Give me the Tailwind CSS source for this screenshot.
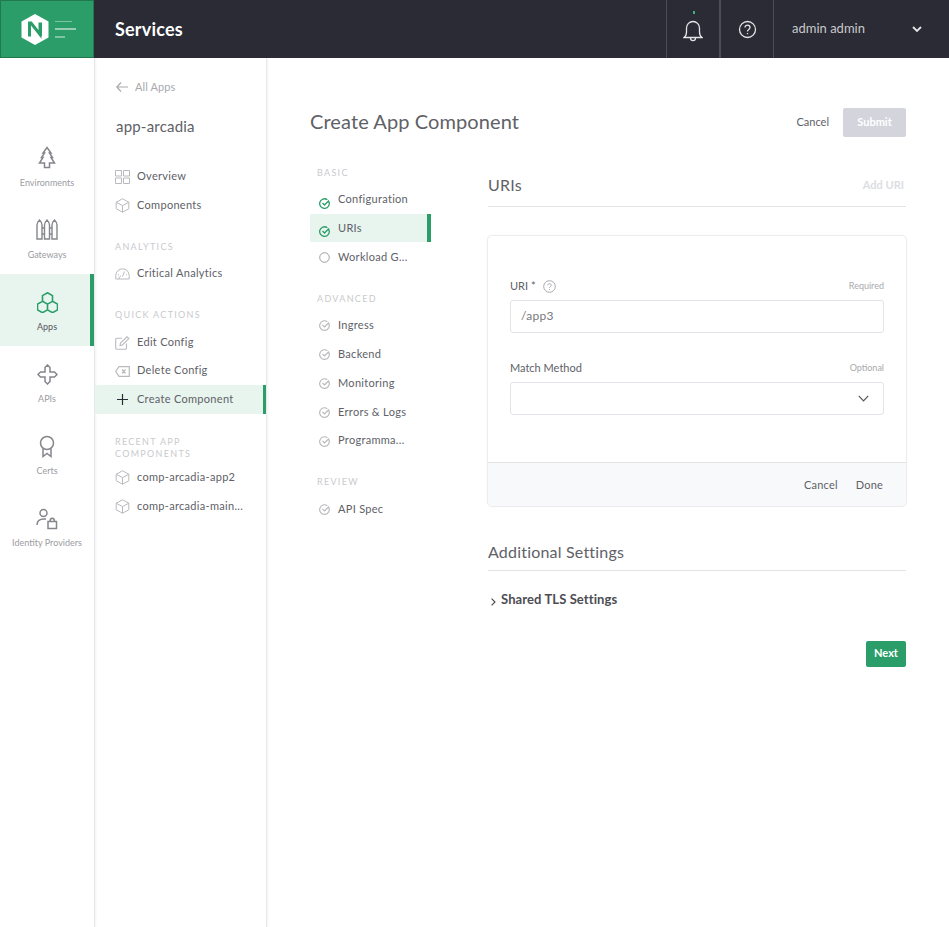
<!doctype html>
<html>
<head>
<title>Create App Component</title>
<meta charset="utf-8">
<script src="https://cdn.jsdelivr.net/npm/@tailwindcss/browser@4"></script>
</head>
<body class="bg-white font-['Lato','Open_Sans',sans-serif] text-[#606167] w-[949px] h-[927px] overflow-hidden">
<!-- top bar -->
<header class="flex h-[58px] bg-[#2a2b34] text-white">
  <div class="w-[94px] bg-[#2a9d68] border border-[#23794f] flex items-center justify-center gap-[6px] pl-[3px]">
    <svg width="28" height="33" viewBox="0 0 28 32"><path d="M14 .5 27.500 8v16L14 31.500.5 24V8z" fill="#fff"/><path d="M8.500 23V9.500h1.500L19 21V9M19.500 22.500V9" fill="none" stroke="#2a9d68" stroke-width="3"/></svg>
    <div class="flex flex-col gap-[6px]"><div class="h-px w-[17px] bg-white/40"></div><div class="h-[2px] w-[21px] bg-white/50"></div><div class="h-[2px] w-[10px] bg-white/40"></div></div>
  </div>
  <div class="flex-1 flex items-center pl-[21px] text-[18px] tracking-[.2px] font-bold">Services</div>
  <div class="relative w-[53px] border-l border-[#4a4d5e] flex items-center justify-center">
    <div class="absolute top-[11px] left-[26px] w-[2px] h-[3px] bg-[#3bb27a]"></div>
    <svg class="mt-[3px]" width="20" height="22" viewBox="0 0 20 22" fill="none" stroke="#e4e4e6" stroke-width="1.300"><path d="M1 17.500h18c-1.500-1-2.500-3-2.500-5.500V8a6.500 6.500 0 0 0-13 0v4c0 2.500-1 4.500-2.500 5.500zM7.500 18c0 3.500 5 3.500 5 0"/></svg>
  </div>
  <div class="w-[54px] border-l-2 border-[#4a4d5e] flex items-center justify-center">
    <svg width="19" height="19" viewBox="0 0 19 19" fill="none" stroke="#e4e4e6" stroke-width="1.300"><circle cx="9.500" cy="9.500" r="8"/><path d="M7 7.500c0-3.300 5-3.300 5 0 0 2-2.500 2-2.500 4"/><path d="M9.500 13v1.200"/></svg>
  </div>
  <div class="w-[176px] border-l border-[#4a4d5e] flex items-center pl-[18px] pr-[27px] justify-between text-[13px] text-[#c9c9cd]">
    <span>admin admin</span>
    <svg width="10" height="7" viewBox="0 0 10 7" fill="none" stroke="#e4e4e6" stroke-width="1.800"><path d="M1 1l4 4 4-4"/></svg>
  </div>
</header>

<div class="flex h-[869px]">
  <!-- icon rail -->
  <nav class="w-[95px] shrink-0 border-r border-[#e8e8ea] shadow-[1px_0_2px_rgba(0,0,0,.05)] pt-[72px] text-[9px] text-[#9b9ca1] text-center">
    <a class="h-[72px] flex flex-col items-center pt-[16px]">
      <svg width="18" height="24" viewBox="0 0 18 24" fill="none" stroke="#85868b" stroke-width="1.500"><path d="M9 1.500l4 5.500h-1.500l3 4.500h-1.500l3.500 5.500H11.500v4.500h-5V17H1.500L5 11.500H3.500l3-4.500H5z"/></svg>
      <span class="mt-[6px]">Environments</span>
    </a>
    <a class="h-[72px] flex flex-col items-center pt-[16px]">
      <svg width="22" height="24" viewBox="0 0 22 24" fill="none" stroke="#85868b" stroke-width="1.400"><path d="M1 21V7c0-2 1-3.500 2.500-5C5 3.500 6 5 6 7v14zM8.500 21V7c0-2 1-3.500 2.500-5 1.500 1.500 2.500 3 2.500 5v14zM16 21V7c0-2 1-3.500 2.500-5C20 3.500 21 5 21 7v14zM6 10h2.500M6 16h2.500M13.500 10H16M13.500 16H16"/></svg>
      <span class="mt-[6px]">Gateways</span>
    </a>
    <a class="h-[72px] flex flex-col items-center pt-[18px] bg-[#e8f4ee] border-r-4 border-[#2a9d68] text-[#55565c] pl-[4px]">
      <svg width="21" height="21" viewBox="0 0 21 21" fill="none" stroke="#2a9d68" stroke-width="1.600"><path d="M10.500.8l5 2.850v5.700l-5 2.850-5-2.850v-5.700zM5.500 9.300l5 2.850v5.700l-5 2.850-5-2.850v-5.700zM15.500 9.300l5 2.850v5.700l-5 2.850-5-2.850v-5.700z"/></svg>
      <span class="mt-[7px]">Apps</span>
    </a>
    <a class="h-[72px] flex flex-col items-center pt-[18px]">
      <svg width="21" height="21" viewBox="0 0 21 21" fill="none" stroke="#85868b" stroke-width="1.500"><path d="M10.500 1 13 3.500V8h4.500l2.500 2.500-2.500 2.500H13v4.500L10.500 20 8 17.500V13H3.500L1 10.500 3.500 8H8V3.500z"/></svg>
      <span class="mt-[7px]">APIs</span>
    </a>
    <a class="h-[72px] flex flex-col items-center pt-[17px]">
      <svg width="16" height="23" viewBox="0 0 16 23" fill="none" stroke="#85868b" stroke-width="1.500"><circle cx="8" cy="8" r="6.500"/><path d="M4 13.500V21.500l4-3 4 3V13.500"/></svg>
      <span class="mt-[6px]">Certs</span>
    </a>
    <a class="h-[72px] flex flex-col items-center pt-[18px]">
      <svg width="22" height="22" viewBox="0 0 22 22" fill="none" stroke="#85868b" stroke-width="1.500"><circle cx="7.500" cy="5" r="3.500"/><path d="M1 17c0-4 2-6 7-6h2"/><path d="M12 13.500h8.500v7H12zM14 13.500c0-4.500 4.500-4.500 4.500 0"/></svg>
      <span class="mt-[6px] whitespace-nowrap">Identity Providers</span>
    </a>
  </nav>

  <!-- app nav -->
  <aside class="w-[172px] shrink-0 border-r border-[#e8e8ea] shadow-[1px_0_2px_rgba(0,0,0,.05)] text-[11px] tracking-[.3px]">
    <div class="flex items-center gap-[7px] pl-[21px] mt-[21px] h-[16px] text-[#a8a9ad] tracking-[.1px]">
      <svg width="12" height="10" viewBox="0 0 12 10" fill="none" stroke="#a8a9ad" stroke-width="1.200"><path d="M5 .5.800 5 5 9.500M1 5h11"/></svg>
      <span>All Apps</span>
    </div>
    <div class="pl-[21px] mt-[19px] text-[15px] leading-[24px] tracking-[.2px]">app-arcadia</div>
    <div class="mt-[24px]">
      <a class="flex items-center gap-[7px] pl-[20px] h-[29px]">
        <svg width="15" height="14" viewBox="0 0 15 14" fill="none" stroke="#b9babd"><path d="M.5.500h6v5.500h-6zM8.500.500h6v5.500h-6zM.5 8h6v5.500h-6zM8.500 8h6v5.500h-6z"/></svg>
        <span>Overview</span>
      </a>
      <a class="flex items-center gap-[7px] pl-[20px] h-[29px]">
        <svg width="15" height="15" viewBox="0 0 15 15" fill="none" stroke="#b9babd"><path d="M7.500.8l6.300 3.400v6.600l-6.300 3.400-6.300-3.400V4.200zM1.200 4.200l6.300 3.400 6.300-3.400M7.500 7.600v6.600"/></svg>
        <span>Components</span>
      </a>
    </div>
    <div class="pl-[20px] mt-[21px] text-[9px] tracking-[1.300px] leading-[12px] text-[#c9cacd]">ANALYTICS</div>
    <a class="flex items-center gap-[7px] pl-[20px] h-[29px] mt-[6px]">
      <svg width="15" height="13" viewBox="0 0 15 12" fill="none" stroke="#b9babd"><path d="M.8 11.500V8a6.700 6.700 0 0 1 13.400 0v3.500zM7.500 9 9.500 4M4 11.500c0-2 1-3 2-3M3 7l1 .5M12 7l-1 .5"/></svg>
      <span>Critical Analytics</span>
    </a>
    <div class="pl-[20px] mt-[21px] text-[9px] tracking-[1.300px] leading-[12px] text-[#c9cacd]">QUICK ACTIONS</div>
    <a class="flex items-center gap-[7px] pl-[20px] h-[29px] mt-[7px]">
      <svg width="15" height="14" viewBox="0 0 15 14" fill="none" stroke="#b9babd" stroke-width="1.100"><path d="M11.500 7.500v4.500a1.300 1.300 0 0 1-1.300 1.300H2A1.300 1.300 0 0 1 .7 12V3.500A1.300 1.300 0 0 1 2 2.200h5M5 9.500l.5-2.500L12 .8l1.800 1.800L7.500 9z"/></svg>
      <span>Edit Config</span>
    </a>
    <a class="flex items-center gap-[7px] pl-[20px] h-[28px]">
      <svg width="15" height="11" viewBox="0 0 15 11" fill="none" stroke="#b9babd" stroke-width="1.200"><path d="M4 .7h10.300v9.600H4L.7 5.500zM7 3.500l3.500 4M10.500 3.500 7 7.500"/></svg>
      <span class="-mt-[1px]">Delete Config</span>
    </a>
    <a class="flex items-center gap-[7px] pl-[22px] h-[29px] bg-[#e8f4ee] border-r-[3px] border-[#2a9d68]">
      <svg class="mr-[2px]" width="11" height="11" viewBox="0 0 11 11" fill="none" stroke="#2a2b34" stroke-width="1.200"><path d="M5.500 0v11M0 5.500h11"/></svg>
      <span>Create Component</span>
    </a>
    <div class="pl-[20px] pr-[40px] mt-[22px] text-[9px] tracking-[1.300px] leading-[12px] text-[#c9cacd]">RECENT APP COMPONENTS</div>
    <div class="mt-[3px]">
      <a class="flex items-center gap-[7px] pl-[20px] h-[29px]">
        <svg width="15" height="15" viewBox="0 0 15 15" fill="none" stroke="#b9babd"><path d="M7.500.8l6.300 3.400v6.600l-6.300 3.400-6.300-3.400V4.200zM1.200 4.200l6.300 3.400 6.300-3.400M7.500 7.600v6.600"/></svg>
        <span>comp-arcadia-app2</span>
      </a>
      <a class="flex items-center gap-[7px] pl-[20px] h-[29px]">
        <svg width="15" height="15" viewBox="0 0 15 15" fill="none" stroke="#b9babd"><path d="M7.500.8l6.300 3.400v6.600l-6.300 3.400-6.300-3.400V4.200zM1.200 4.200l6.300 3.400 6.300-3.400M7.500 7.600v6.600"/></svg>
        <span>comp-arcadia-main...</span>
      </a>
    </div>
  </aside>

  <!-- main -->
  <main class="flex-1 pl-[43px] pr-[43px] pt-[50px]">
    <div class="flex items-center justify-between h-[29px]">
      <h1 class="text-[20px] tracking-[.1px] pb-[4px] text-[#606167]">Create App Component</h1>
      <div class="flex items-center gap-[14px] text-[11px]">
        <span>Cancel</span>
        <button class="w-[63px] h-[29px] bg-[#d3d4dc] rounded-[2px] text-white font-bold">Submit</button>
      </div>
    </div>

    <div class="flex mt-[21px]">
      <!-- steps -->
      <div class="w-[121px] shrink-0 text-[11px] tracking-[.3px]">
        <div class="pl-[7px] text-[9px] tracking-[1.300px] leading-[12px] text-[#c9cacd] mt-[9px]">BASIC</div>
        <a class="flex items-center gap-[8px] pl-[9px] h-[28px] mt-[7px]">
          <svg class="mt-[6px]" width="11" height="11" viewBox="0 0 11 11" fill="none" stroke="#2a9d68" stroke-width="1.300"><path d="M9.800 3.500a4.800 4.800 0 1 1-1.500-1.800M3.500 5l2 2 4.500-4.500"/></svg>
          <span class="-mt-[1px]">Configuration</span>
        </a>
        <a class="flex items-center gap-[8px] pl-[9px] h-[28px] bg-[#e8f4ee] border-r-4 border-[#2a9d68]">
          <svg class="mt-[6px]" width="11" height="11" viewBox="0 0 11 11" fill="none" stroke="#2a9d68" stroke-width="1.300"><path d="M9.800 3.500a4.800 4.800 0 1 1-1.500-1.800M3.500 5l2 2 4.500-4.500"/></svg>
          <span>URIs</span>
        </a>
        <a class="flex items-center gap-[8px] pl-[9px] h-[30px]">
          <svg width="11" height="11" viewBox="0 0 11 11" fill="none" stroke="#9b9ca1"><circle cx="5.500" cy="5.500" r="4.800"/></svg>
          <span>Workload G...</span>
        </a>
        <div class="pl-[7px] text-[9px] tracking-[1.300px] leading-[12px] text-[#c9cacd] mt-[21px]">ADVANCED</div>
        <div class="mt-[6px]">
          <a class="flex items-center gap-[8px] pl-[9px] h-[29px]">
            <svg width="11" height="11" viewBox="0 0 11 11" fill="none" stroke="#b9babd" stroke-width="1.200"><path d="M9.800 3.500a4.800 4.800 0 1 1-1.500-1.800M3.500 5l2 2 4.500-4.500"/></svg>
            <span>Ingress</span>
          </a>
          <a class="flex items-center gap-[8px] pl-[9px] h-[29px]">
            <svg width="11" height="11" viewBox="0 0 11 11" fill="none" stroke="#b9babd" stroke-width="1.200"><path d="M9.800 3.500a4.800 4.800 0 1 1-1.500-1.800M3.500 5l2 2 4.500-4.500"/></svg>
            <span>Backend</span>
          </a>
          <a class="flex items-center gap-[8px] pl-[9px] h-[29px]">
            <svg width="11" height="11" viewBox="0 0 11 11" fill="none" stroke="#b9babd" stroke-width="1.200"><path d="M9.800 3.500a4.800 4.800 0 1 1-1.500-1.800M3.500 5l2 2 4.500-4.500"/></svg>
            <span>Monitoring</span>
          </a>
          <a class="flex items-center gap-[8px] pl-[9px] h-[29px]">
            <svg width="11" height="11" viewBox="0 0 11 11" fill="none" stroke="#b9babd" stroke-width="1.200"><path d="M9.800 3.500a4.800 4.800 0 1 1-1.500-1.800M3.500 5l2 2 4.500-4.500"/></svg>
            <span>Errors &amp; Logs</span>
          </a>
          <a class="flex items-center gap-[8px] pl-[9px] h-[28px]">
            <svg width="11" height="11" viewBox="0 0 11 11" fill="none" stroke="#b9babd" stroke-width="1.200"><path d="M9.800 3.500a4.800 4.800 0 1 1-1.500-1.800M3.500 5l2 2 4.500-4.500"/></svg>
            <span class="-mt-[1px]">Programma...</span>
          </a>
        </div>
        <div class="pl-[7px] text-[9px] tracking-[1.300px] leading-[12px] text-[#c9cacd] mt-[21px]">REVIEW</div>
        <a class="flex items-center gap-[8px] pl-[9px] h-[29px] mt-[7px]">
          <svg width="11" height="11" viewBox="0 0 11 11" fill="none" stroke="#b9babd" stroke-width="1.200"><path d="M9.800 3.500a4.800 4.800 0 1 1-1.500-1.800M3.500 5l2 2 4.500-4.500"/></svg>
          <span>API Spec</span>
        </a>
      </div>

      <!-- form -->
      <div class="w-[418px] ml-[57px]">
        <div class="flex items-center justify-between h-[40px] border-b border-[#e3e3e6] pb-[3px] mt-[9px] pr-[2px]">
          <h2 class="text-[16px] tracking-[.2px]">URIs</h2>
          <span class="text-[11px] font-bold text-[#dcdde2]">Add URI</span>
        </div>
        <div class="mt-[28px] -ml-px -mr-px border border-[#ececef] rounded-[5px] shadow-[0_0_2px_rgba(0,0,0,.04)]">
          <div class="h-[226px] px-[22px] pt-[41px]">
            <div class="flex items-center justify-between h-[18px] text-[11px]">
              <span class="flex items-center gap-[7px]">URI *
                <svg width="13" height="13" viewBox="0 0 13 13" fill="none" stroke="#a8a9ad"><circle cx="6.500" cy="6.500" r="5.800"/><path d="M4.800 5.300c0-2.200 3.400-2.200 3.400 0 0 1.400-1.700 1.400-1.700 2.700M6.500 9v.8"/></svg>
              </span>
              <span class="text-[9px] text-[#a8a9ad]">Required</span>
            </div>
            <div class="mt-[5px] h-[33px] border border-[#e3e3ea] rounded-[3px] flex items-center px-[10px] pb-[2px] text-[12px] tracking-[.3px] text-[#77787c]">/app3</div>
            <div class="flex items-center justify-between h-[18px] text-[11px] mt-[26px]">
              <span>Match Method</span>
              <span class="text-[9px] text-[#a8a9ad]">Optional</span>
            </div>
            <div class="mt-[5px] h-[33px] border border-[#e3e3ea] rounded-[3px] flex items-center justify-end pr-[14px]">
              <svg width="11" height="7" viewBox="0 0 11 7" fill="none" stroke="#55565c" stroke-width="1.200"><path d="M.8.800l4.700 5 4.700-5"/></svg>
            </div>
          </div>
          <div class="h-[44px] bg-[#f8f9fb] border-t border-[#e3e3e6] rounded-b-[5px] flex items-center justify-end gap-[18px] pt-[2px] pr-[23px] text-[11px] tracking-[.2px]">
            <span>Cancel</span><span>Done</span>
          </div>
        </div>
        <div class="mt-[33px] h-[31px] border-b border-[#e3e3e6] text-[16px] tracking-[.2px] leading-[24px]">Additional Settings</div>
        <div class="flex items-center mt-[20px] h-[18px] text-[13px] font-bold tracking-[.1px] pl-[3px] text-[#4c4d53]">
          <svg class="mt-[4px] mr-[5px]" width="5" height="8" viewBox="0 0 5 8" fill="none" stroke="#44454b" stroke-width="1.100"><path d="M.6.600 4 4 .6 7.400"/></svg>
          Shared TLS Settings
        </div>
        <div class="flex justify-end mt-[32px]">
          <button class="w-[40px] h-[26px] bg-[#2a9d68] rounded-[2px] text-white text-[11px] font-bold pb-[2px]">Next</button>
        </div>
      </div>
    </div>
  </main>
</div>
</body>
</html>
